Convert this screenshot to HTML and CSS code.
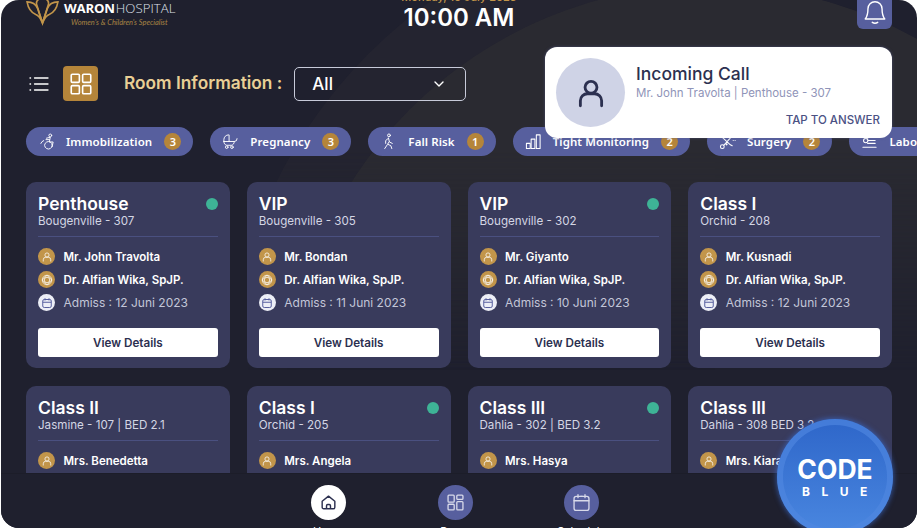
FILE: index.html
```html
<!DOCTYPE html>
<html lang="en">
<head>
<meta charset="utf-8">
<title>Waron Hospital</title>
<link rel="stylesheet" href="styles.css">
</head>
<body>
<svg class="defs" width="0" height="0" aria-hidden="true">
  <symbol id="i-user" viewBox="0 0 24 24"><circle cx="12" cy="8" r="4.2"/><path d="M4.5 21v-3.5a5 5 0 0 1 5-5h5a5 5 0 0 1 5 5V21"/></symbol>
  <symbol id="i-doc" viewBox="0 0 24 24"><path d="M12 2.5 21.5 12 12 21.5 2.5 12Z"/><circle cx="12" cy="12" r="5.5"/><circle cx="12" cy="12" r="9.5"/></symbol>
  <symbol id="i-cal" viewBox="0 0 24 24"><rect x="3.5" y="5" width="17" height="16" rx="3"/><path d="M3.5 10.5h17M8 2.5V7M16 2.5V7"/></symbol>
  <symbol id="i-grid" viewBox="0 0 24 24"><rect x="3" y="3" width="7.5" height="7.5" rx="1"/><rect x="13.5" y="3" width="7.5" height="7.5" rx="1"/><rect x="3" y="13.5" width="7.5" height="7.5" rx="1"/><rect x="13.5" y="13.5" width="7.5" height="7.5" rx="1"/></symbol>
</svg>
<main class="screen">
  <div class="arc arc-outer"></div>
  <div class="arc arc-inner"></div>

  <header class="topbar">
    <div class="brand">
      <svg class="brand-mark" viewBox="0 0 34 28" fill="none" stroke="#c2954a" stroke-width="1.7">
        <path d="M1 3c5 0 9 2 11 7l5 15 5-15c2-5 6-7 11-7-1 6-4 11-9 13-3 1-5 4-7 9-2-5-4-8-7-9C5 14 2 9 1 3Z"/>
        <path d="M17 25 11 6c-1-3 1-6 6-8 5 2 7 5 6 8Z"/>
      </svg>
      <div class="brand-text">
        <div class="brand-name"><b>WARON</b><span>HOSPITAL</span></div>
        <div class="brand-tag">Women's &amp; Children's Specialist</div>
      </div>
    </div>
    <div class="clock">
      <div class="clock-date">Monday, 10 July 2023</div>
      <div class="clock-time">10:00 AM</div>
    </div>
    <button class="bell" aria-label="Notifications">
      <svg viewBox="0 0 24 24" fill="none" stroke="#fff" stroke-width="1.3" stroke-linecap="round" stroke-linejoin="round"><path d="M12 2.5a6.5 6.5 0 0 0-6.5 6.5c0 6-1 7.5-2.5 9.5h18c-1.500-2-2.500-3.500-2.500-9.500A6.500 6.500 0 0 0 12 2.500Z"/><path d="M9.500 21.500c1.500 1 3.500 1 5 0"/></svg>
    </button>
  </header>

  <section class="toolbar">
    <svg class="menu" viewBox="0 0 20 16" fill="none" stroke="#fff" stroke-width="1.300" stroke-linecap="round"><path d="M5.500 2H19M5.500 8H19M5.500 14H19M1 2h.6M1 8h.6M1 14h.6"/></svg>
    <div class="tile"><svg class="ico-stroke"><use href="#i-grid"/></svg></div>
    <h1 class="room-title">Room Information :</h1>
    <div class="select">
      <span>All</span>
      <svg viewBox="0 0 12 8" fill="none" stroke="#fff" stroke-width="1.400" stroke-linecap="round" stroke-linejoin="round"><path d="M2 2l4 4 4-4"/></svg>
    </div>
  </section>

  <nav class="chips">
    <div class="chip">
      <svg viewBox="0 0 18 18" fill="none" stroke="#fff" stroke-width="1" stroke-linecap="round" stroke-linejoin="round"><circle cx="13" cy="2.600" r="1.500"/><path d="M7 13.500a4 4 0 1 0 0-1zM9 5.500l4-1-1 5h4l-1 5M6 8a5 5 0 0 0-3 3"/><path d="M12 7H8.500"/></svg>
      <span class="chip-label">Immobilization</span><span class="chip-count">3</span>
    </div>
    <div class="chip">
      <svg viewBox="0 0 18 18" fill="none" stroke="#fff" stroke-width="1" stroke-linecap="round" stroke-linejoin="round"><path d="M2 9V7a5 5 0 0 1 5-5h.5v7M2 9h11a3 3 0 0 0 3-3M2 9c0 2 1 3.500 3 4h5c2-.5 3-2 3-4"/><circle cx="5" cy="15" r="1.400"/><circle cx="10.500" cy="15" r="1.400"/></svg>
      <span class="chip-label">Pregnancy</span><span class="chip-count">3</span>
    </div>
    <div class="chip">
      <svg viewBox="0 0 18 18" fill="none" stroke="#fff" stroke-width="1" stroke-linecap="round" stroke-linejoin="round"><circle cx="9.500" cy="2.500" r="1.500"/><path d="M9 5.500 6 8v3M9 5.500l1 4 3 1.500M9.500 9.500 8 12l-3 4.500M8.500 12l3 1.500 1 3"/></svg>
      <span class="chip-label">Fall Risk</span><span class="chip-count">1</span>
    </div>
    <div class="chip">
      <svg viewBox="0 0 18 18" fill="none" stroke="#fff" stroke-width="1.100" stroke-linejoin="round"><rect x="1.500" y="11" width="4" height="5.500"/><rect x="6.500" y="6.500" width="4" height="10"/><rect x="12" y="2" width="4" height="14.500"/></svg>
      <span class="chip-label">Tight Monitoring</span><span class="chip-count">2</span>
    </div>
    <div class="chip">
      <svg viewBox="0 0 18 18" fill="none" stroke="#fff" stroke-width="1.100" stroke-linecap="round"><circle cx="3.500" cy="14.500" r="2"/><circle cx="8" cy="12" r=".6"/><path d="M5 13 14 3M3 4l9 8.500 2 1M15 8h.1M17 8h.1"/></svg>
      <span class="chip-label">Surgery</span><span class="chip-count">2</span>
    </div>
    <div class="chip">
      <svg viewBox="0 0 18 18" fill="none" stroke="#fff" stroke-width="1.100" stroke-linecap="round"><circle cx="5" cy="8" r="2.300"/><path d="M6.500 6 10 3h2M7.500 8H15M7 11h8M2 15h14"/></svg>
      <span class="chip-label">Laboratory</span><span class="chip-count">4</span>
    </div>
  </nav>

  <section class="cards">
    <article class="card">
      <div class="card-head"><h2>Penthouse</h2><i class="dot"></i></div>
      <p class="card-sub">Bougenville - 307</p>
      <ul class="info">
        <li class="strong"><span class="badge"><svg><use href="#i-user"/></svg></span>Mr. John Travolta</li>
        <li class="strong"><span class="badge"><svg><use href="#i-doc"/></svg></span>Dr. Alfian Wika, SpJP.</li>
        <li><span class="badge light"><svg><use href="#i-cal"/></svg></span>Admiss : 12 Juni 2023</li>
      </ul>
      <button class="details">View Details</button>
    </article>
    <article class="card">
      <div class="card-head"><h2>VIP</h2></div>
      <p class="card-sub">Bougenville - 305</p>
      <ul class="info">
        <li class="strong"><span class="badge"><svg><use href="#i-user"/></svg></span>Mr. Bondan</li>
        <li class="strong"><span class="badge"><svg><use href="#i-doc"/></svg></span>Dr. Alfian Wika, SpJP.</li>
        <li><span class="badge light"><svg><use href="#i-cal"/></svg></span>Admiss : 11 Juni 2023</li>
      </ul>
      <button class="details">View Details</button>
    </article>
    <article class="card">
      <div class="card-head"><h2>VIP</h2><i class="dot"></i></div>
      <p class="card-sub">Bougenville - 302</p>
      <ul class="info">
        <li class="strong"><span class="badge"><svg><use href="#i-user"/></svg></span>Mr. Giyanto</li>
        <li class="strong"><span class="badge"><svg><use href="#i-doc"/></svg></span>Dr. Alfian Wika, SpJP.</li>
        <li><span class="badge light"><svg><use href="#i-cal"/></svg></span>Admiss : 10 Juni 2023</li>
      </ul>
      <button class="details">View Details</button>
    </article>
    <article class="card">
      <div class="card-head"><h2>Class I</h2></div>
      <p class="card-sub">Orchid - 208</p>
      <ul class="info">
        <li class="strong"><span class="badge"><svg><use href="#i-user"/></svg></span>Mr. Kusnadi</li>
        <li class="strong"><span class="badge"><svg><use href="#i-doc"/></svg></span>Dr. Alfian Wika, SpJP.</li>
        <li><span class="badge light"><svg><use href="#i-cal"/></svg></span>Admiss : 12 Juni 2023</li>
      </ul>
      <button class="details">View Details</button>
    </article>
    <article class="card">
      <div class="card-head"><h2>Class II</h2></div>
      <p class="card-sub">Jasmine - 107 | BED 2.1</p>
      <ul class="info">
        <li class="strong"><span class="badge"><svg><use href="#i-user"/></svg></span>Mrs. Benedetta</li>
      </ul>
    </article>
    <article class="card">
      <div class="card-head"><h2>Class I</h2><i class="dot"></i></div>
      <p class="card-sub">Orchid - 205</p>
      <ul class="info">
        <li class="strong"><span class="badge"><svg><use href="#i-user"/></svg></span>Mrs. Angela</li>
      </ul>
    </article>
    <article class="card">
      <div class="card-head"><h2>Class III</h2><i class="dot"></i></div>
      <p class="card-sub">Dahlia - 302 | BED 3.2</p>
      <ul class="info">
        <li class="strong"><span class="badge"><svg><use href="#i-user"/></svg></span>Mrs. Hasya</li>
      </ul>
    </article>
    <article class="card">
      <div class="card-head"><h2>Class III</h2></div>
      <p class="card-sub">Dahlia - 308 BED 3.2</p>
      <ul class="info">
        <li class="strong"><span class="badge"><svg><use href="#i-user"/></svg></span>Mrs. Kiara</li>
      </ul>
    </article>
  </section>

  <aside class="call">
    <div class="call-avatar"><svg><use href="#i-user"/></svg></div>
    <div class="call-body">
      <div class="call-title">Incoming Call</div>
      <div class="call-sub">Mr. John Travolta | Penthouse - 307</div>
      <div class="call-action">TAP TO ANSWER</div>
    </div>
  </aside>

  <footer class="bottom-nav">
    <div class="nav-item active">
      <span class="nav-circle"><svg viewBox="0 0 24 24" fill="none" stroke-width="1.800" stroke-linejoin="round"><path d="M4 10.500 12 4l8 6.500V18a2 2 0 0 1-2 2H6a2 2 0 0 1-2-2Z"/><path d="M9.500 20v-4a1.500 1.500 0 0 1 1.500-1.500h2a1.500 1.500 0 0 1 1.500 1.500v4"/></svg></span>
      <span class="nav-label">Home</span>
    </div>
    <div class="nav-item">
      <span class="nav-circle"><svg viewBox="0 0 24 24" fill="none" stroke-width="1.500" stroke-linejoin="round"><rect x="3.500" y="3.500" width="7" height="8" rx="1"/><rect x="13.500" y="3.500" width="7" height="5" rx="1"/><rect x="3.500" y="14" width="7" height="6.500" rx="1"/><rect x="13.500" y="11" width="7" height="9.500" rx="1"/></svg></span>
      <span class="nav-label">Room</span>
    </div>
    <div class="nav-item">
      <span class="nav-circle"><svg viewBox="0 0 24 24" fill="none" stroke-width="1.500" stroke-linecap="round" stroke-linejoin="round"><rect x="3.500" y="5" width="17" height="16" rx="2.500"/><path d="M3.500 10h17M8 3v3.500M16 3v3.500M11 5h2"/></svg></span>
      <span class="nav-label">Schedule</span>
    </div>
  </footer>

  <button class="code-blue">
    <span class="code-word">CODE</span>
    <span class="code-color">BLUE</span>
  </button>
</main>
</body>
</html>
```
FILE: styles.css
```css
* { box-sizing: border-box; }
html, body { margin: 0; height: 100%; overflow: hidden; background: #fff; }
body { font-family: "Inter", "Liberation Sans", sans-serif; color: #fff; }
.defs { position: absolute; }
ul, p, h1, h2 { margin: 0; padding: 0; }
button { font: inherit; border: 0; padding: 0; cursor: pointer; }

.screen {
  position: relative;
  width: 916px;
  height: 528px;
  margin-left: 1px;
  padding: 0 25px;
  overflow: hidden;
  border-radius: 18px;
  background: #1f202e;
}
.arc { position: absolute; border-radius: 50%; }
.arc-outer {
  left: 224px; top: -90px; width: 980px; height: 980px; background: #242430;
  clip-path: inset(0 50% 0 23px);
  -webkit-mask-image: linear-gradient(to bottom, #000 240px, transparent 460px);
  mask-image: linear-gradient(to bottom, #000 240px, transparent 460px);
}
.arc-inner {
  left: 284px; top: -15px; width: 850px; height: 850px; background: #2a2a31;
  -webkit-mask-image: linear-gradient(to bottom, #000 165px, transparent 385px);
  mask-image: linear-gradient(to bottom, #000 165px, transparent 385px);
}

/* top bar */
.topbar {
  position: relative;
  display: flex;
  align-items: flex-start;
  justify-content: space-between;
  height: 35px;
  margin-top: -6px;
}
.brand { display: flex; align-items: flex-start; gap: 5px; margin-top: 5px; }
.brand-mark { width: 33px; height: 27px; flex: none; }
.brand-text { margin-top: 1px; }
.brand-name { font-family: "Open Sans", sans-serif; font-size: 13.200px; line-height: 16px; letter-spacing: -.2px; white-space: nowrap; color: #fff; }
.brand-name b { font-weight: 700; }
.brand-name span { font-weight: 300; margin-left: 1px; color: #dfe0ea; letter-spacing: .05px; }
.brand-tag { font-family: "Lato", sans-serif; font-style: italic; font-size: 7.400px; line-height: 9px; margin: 2px 0 0 7px; color: #a98544; white-space: nowrap; }
.clock { position: absolute; left: 0; right: 0; top: 0; text-align: center; }
.clock-date { font-size: 11px; line-height: 13px; margin-top: -3px; color: #c2954a; font-weight: 500; }
.clock-time { font-size: 24px; line-height: 28px; font-weight: 600; }
.bell {
  position: relative;
  width: 35px;
  height: 35px;
  border-radius: 6px;
  background: #575f9e;
  display: flex;
  align-items: center;
  justify-content: center;
}
.bell svg { width: 26px; height: 26px; }

/* toolbar */
.toolbar { position: relative; display: flex; align-items: center; height: 35px; margin-top: 37px; }
.menu { width: 20px; height: 16px; margin-left: 3px; }
.tile {
  width: 35px; height: 35px; margin-left: 14px; border-radius: 4px; background: #b5853a;
  display: flex; align-items: center; justify-content: center;
}
.ico-stroke { width: 26px; height: 26px; fill: none; stroke: #fff; stroke-width: 1.500; }
.room-title { font-size: 17.300px; font-weight: 600; line-height: 22px; color: #e9cf95; margin: -2px 0 0 26px; white-space: nowrap; }
.select {
  display: flex; align-items: center; justify-content: space-between;
  width: 172px; height: 34px; margin-left: 12px; margin-top: 1px; padding: 0 20px 0 17px;
  border: 1px solid #c7cad9; border-radius: 5px; font-size: 17px; font-weight: 500;
}
.select svg { width: 12px; height: 8px; }

/* chips */
.chips { position: relative; display: flex; gap: 17px; margin-top: 26px; height: 29px; width: 1000px; }
.chip {
  flex: none; display: flex; align-items: center; height: 29px; padding: 0 12px;
  border-radius: 15px; background: #575f9e;
}
.chip svg { width: 17px; height: 17px; flex: none; margin-right: 11px; }
.chip-label { font-family: "Noto Sans", sans-serif; font-weight: 600; font-size: 11.500px; letter-spacing: .09px; white-space: nowrap; }
.chip-count {
  width: 17px; height: 17px; margin-left: 12px; border-radius: 50%; background: #b5853a;
  display: flex; align-items: center; justify-content: center;
  font-family: "Noto Sans", sans-serif; font-size: 11px; font-weight: 600;
}

/* cards */
.cards { position: relative; display: grid; grid-template-columns: repeat(4, 1fr); gap: 18px 17px; margin-top: 26px; }
.card { height: 186px; padding: 12px 12px 0; border-radius: 10px; background: #393b5c; }
.card-head { display: flex; align-items: center; justify-content: space-between; height: 20px; }
.card-head h2 { font-size: 17.500px; line-height: 20px; font-weight: 600; }
.dot { width: 12px; height: 12px; border-radius: 50%; background: #3eb396; }
.card-sub { font-size: 11.600px; line-height: 16px; margin-top: -1px; color: #d4d6e4; border-bottom: 1px solid #4a5080; height: 24px; }
.info { list-style: none; margin-top: 8px; }
.info li { display: flex; align-items: center; height: 23px; font-size: 12px; color: #c3c6d8; white-space: nowrap; }
.info li.strong { color: #fff; font-weight: 600; font-size: 11.500px; }
.badge {
  width: 17px; height: 17px; margin-right: 8.500px; border-radius: 50%; background: #c2954a; flex: none;
  display: flex; align-items: center; justify-content: center;
}
.badge svg { width: 12px; height: 12px; fill: none; stroke: #fff; stroke-width: 1.500; }
.badge.light { background: #eceef6; }
.badge.light svg { stroke: #575f9e; stroke-width: 2; }
.details {
  display: block; width: 100%; height: 29px; margin-top: 14px; border-radius: 3px;
  background: #fff; color: #2c3050; font-size: 11.700px; font-weight: 600;
}

/* incoming call */
.call {
  position: absolute; left: 544px; top: 47px; width: 347px; height: 91px;
  display: flex; padding: 11px 12px 11px 11px; border-radius: 12px; background: #fff;
  box-shadow: 0 0 3px rgba(90, 95, 150, .6);
}
.call-avatar {
  width: 69px; height: 69px; flex: none; border-radius: 50%; background: #cfd3e6;
  display: flex; align-items: center; justify-content: center;
}
.call-avatar svg { width: 34px; height: 34px; fill: none; stroke: #2c3050; stroke-width: 2; stroke-linecap: round; }
.call-body { flex: 1; margin-left: 11px; padding-top: 5px; color: #2c3050; position: relative; }
.call-title { font-size: 17.500px; line-height: 22px; font-weight: 500; }
.call-sub { font-size: 11.500px; line-height: 15px; color: #8f94b8; margin-top: 1px; }
.call-action { position: absolute; right: 0; top: 55px; font-size: 11.500px; line-height: 14px; font-weight: 500; color: #4b5183; }

/* bottom nav */
.bottom-nav {
  position: absolute; left: 0; right: 0; top: 473px; height: 60px;
  display: flex; justify-content: center; padding: 11px 8px 0 0;
  background: #1f202e; border-top: 1px solid #1c1d29;
}
.nav-item { width: 126.500px; display: flex; flex-direction: column; align-items: center; }
.nav-circle {
  width: 35px; height: 35px; flex: none; border-radius: 50%; background: #575f9e;
  display: flex; align-items: center; justify-content: center;
}
.nav-circle svg { width: 21px; height: 21px; stroke: #d8daea; }
.nav-item.active .nav-circle { background: #fff; }
.nav-item.active svg { stroke: #2c3050; width: 19px; height: 19px; }
.nav-label { font-size: 11px; line-height: 14px; margin-top: 4px; color: #fff; flex: none; }

/* code blue */
.code-blue {
  position: absolute; left: 776px; top: 419px; width: 116px; height: 116px; border-radius: 50%;
  display: flex; flex-direction: column; align-items: center; padding-top: 35px;
  color: #fff; background: linear-gradient(180deg, #2e66c9, #4a87e0);
  box-shadow: inset 0 0 0 6px rgba(80, 135, 225, .65), 0 0 5px 1px rgba(60, 110, 215, .6);
}
.code-word { font-size: 26.500px; line-height: 30px; font-weight: 700; }
.code-color { font-size: 12px; line-height: 14px; font-weight: 700; letter-spacing: 11.500px; margin: 1px 0 0 11px; }
```
